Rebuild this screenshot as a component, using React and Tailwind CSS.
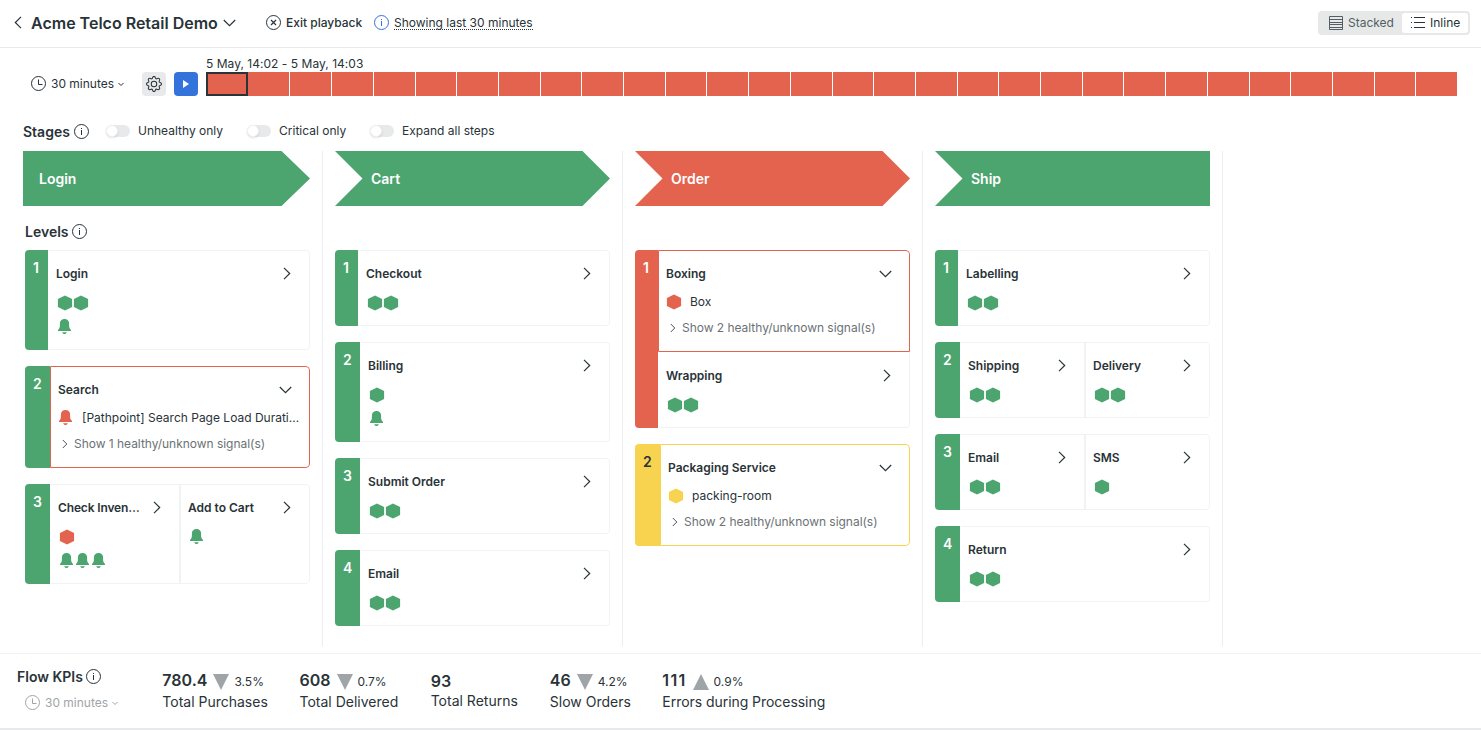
import { BsGear } from "react-icons/bs";

const TONES = {
  green: { bg: "bg-[#4ca46f]", text: "text-[#4ca46f]", digit: "text-white" },
  red: { bg: "bg-[#e3634f]", text: "text-[#e3634f]", digit: "text-white" },
  yellow: { bg: "bg-[#f8d350]", text: "text-[#f8d350]", digit: "text-[#293338]" },
};

function Info({ className = "" }) {
  return (
    <svg className={`shrink-0 ${className}`} width="15" height="15" viewBox="0 0 15 15" fill="none" stroke="currentColor">
      <circle cx="7.5" cy="7.5" r="7" />
      <path d="M7.5 6v5M7.5 4v1" />
    </svg>
  );
}

function Clock() {
  return (
    <svg className="-mt-px shrink-0" width="15" height="15" viewBox="0 0 15 15" fill="none" stroke="currentColor">
      <circle cx="7.5" cy="7.5" r="7" />
      <path d="M7.5 3.500v5h4" />
    </svg>
  );
}

function ChevronRight({ className = "" }) {
  return (
    <svg className={`shrink-0 ${className}`} width="8" height="13" viewBox="0 0 8 13" fill="none" stroke="currentColor" strokeWidth="1.2">
      <path d="M1 0.8l5.7 5.7L1 12.2" />
    </svg>
  );
}

function ChevronDown({ className = "" }) {
  return (
    <svg className={`shrink-0 ${className}`} width="13" height="8" viewBox="0 0 13 8" fill="none" stroke="currentColor" strokeWidth="1.2">
      <path d="M0.8 1l5.7 5.7L12.2 1" />
    </svg>
  );
}

function SmallChevron() {
  return (
    <svg className="shrink-0" width="6" height="5" viewBox="0 0 6 5" fill="none" stroke="currentColor">
      <path d="M0.5 1L3 3.5 5.5 1" />
    </svg>
  );
}

function Hex({ tone }) {
  return (
    <svg className={`shrink-0 ${TONES[tone].text}`} width="16" height="16" viewBox="0 0 16 16" fill="currentColor">
      <path d="M8 .4l7.1 3.700v7.800l-7.100 3.700-7.100-3.700V4.100z" />
    </svg>
  );
}

function Bell({ tone }) {
  return (
    <svg className={`shrink-0 ${TONES[tone].text}`} width="16" height="16" viewBox="0 0 16 16" fill="currentColor">
      <path d="M1 12.1V10.9C2.400 9.800 2.900 8.300 2.900 6.300V4.400C2.900 1.900 4.800.1 7.500.1S12.100 1.900 12.100 4.400V6.300C12.100 8.300 12.600 9.800 14 10.900V12.100zM5.200 13.200h4.600C9.400 14.400 8.600 15 7.500 15S5.600 14.400 5.200 13.200z" />
    </svg>
  );
}

const Signal = ({ kind, tone }) => (kind === "hex" ? <Hex tone={tone} /> : <Bell tone={tone} />);

function Step({ step, className }) {
  const open = Boolean(step.signal);
  return (
    <div className={`flex min-w-0 flex-1 flex-col border bg-white pt-[11px] pl-[7px] ${className}`}>
      <div className="flex h-6 items-center justify-between">
        <span className={`text-xs font-semibold whitespace-nowrap ${step.tight ? "tracking-[-0.15px]" : ""}`}>{step.name}</span>
        {open ? <ChevronDown className="mr-[17px]" /> : <ChevronRight className="-mt-px mr-[18px]" />}
      </div>
      {open ? (
        <div className="mt-[3px] flex flex-col">
          <div className="flex h-[26px] items-center gap-2">
            <Signal kind={step.signal.kind} tone={step.signal.tone} />
            <span className="text-xs whitespace-nowrap">{step.signal.label}</span>
          </div>
          <div className="flex h-[26px] items-center gap-1.5 pl-1 text-[#6b7275]">
            <svg width="6" height="10" viewBox="0 0 6 10" fill="none" stroke="#4a5256">
              <path d="M.8 1l4 4-4 4" />
            </svg>
            <span className="text-xs tracking-[-0.03px] whitespace-nowrap">{step.more}</span>
          </div>
        </div>
      ) : (
        <div className="mt-[5px] flex flex-col pl-px">
          {step.rows.map((row, i) => (
            <div key={i} className="flex h-6 items-center">
              {row.map(([kind, tone], j) => (
                <Signal key={j} kind={kind} tone={tone} />
              ))}
            </div>
          ))}
        </div>
      )}
    </div>
  );
}

function Level({ n, level }) {
  const tone = TONES[level.tone];
  const alone = level.steps.length === 1;
  return (
    <div className={`flex shrink-0 overflow-hidden rounded ${level.height}`}>
      <div className={`shrink-0 pt-[7px] pl-2 text-sm leading-[22px] font-semibold ${n === 1 ? "w-[23px]" : "w-[25px]"} ${tone.bg} ${tone.digit}`}>{n}</div>
      <div className={`flex min-w-0 flex-1 ${level.stacked ? "flex-col" : ""}`}>
        {level.steps.map((step, i) => (
          <Step
            key={step.name}
            step={step}
            className={step.frame ?? (i > 0 ? "rounded-r border-[#f1f2f2]" : alone ? "rounded-r border-[#f1f2f2] border-l-white" : "border-[#f1f2f2] border-l-white")}
          />
        ))}
      </div>
    </div>
  );
}

const H = ["hex", "green"];
const B = ["bell", "green"];
const one = (name, rows) => ({ tone: "green", height: rows.length > 1 ? "h-[100px]" : "h-[76px]", steps: [{ name, rows }] });

const STAGES = [
  {
    name: "Login",
    arrow: "pl-4 bg-[#4ca46f] [clip-path:polygon(0_0,calc(100%_-_28.5px)_0,100%_50%,calc(100%_-_28.5px)_100%,0_100%)]",
    levels: [
      one("Login", [[H, H], [B]]),
      {
        tone: "green",
        height: "h-[102px]",
        steps: [
          {
            name: "Search",
            frame: "rounded-r border-[#e3634f]",
            signal: { kind: "bell", tone: "red", label: "[Pathpoint] Search Page Load Durati…" },
            more: "Show 1 healthy/unknown signal(s)",
          },
        ],
      },
      {
        tone: "green",
        height: "h-[100px]",
        steps: [
          { name: "Check Inven…", tight: true, rows: [[["hex", "red"]], [B, B, B]] },
          { name: "Add to Cart", rows: [[B]] },
        ],
      },
    ],
  },
  {
    name: "Cart",
    arrow: "pl-9 bg-[#4ca46f] [clip-path:polygon(0_0,calc(100%_-_27.5px)_0,100%_50%,calc(100%_-_27.5px)_100%,0_100%,27.5px_50%)]",
    levels: [one("Checkout", [[H, H]]), one("Billing", [[H], [B]]), one("Submit Order", [[H, H]]), one("Email", [[H, H]])],
  },
  {
    name: "Order",
    arrow: "pl-9 bg-[#e3634f] [clip-path:polygon(0_0,calc(100%_-_27.5px)_0,100%_50%,calc(100%_-_27.5px)_100%,0_100%,27.5px_50%)]",
    levels: [
      {
        tone: "red",
        height: "h-[178px]",
        stacked: true,
        steps: [
          {
            name: "Boxing",
            frame: "basis-[102px] grow-0 shrink-0 rounded-tr border-[#e3634f]",
            signal: { kind: "hex", tone: "red", label: "Box" },
            more: "Show 2 healthy/unknown signal(s)",
          },
          { name: "Wrapping", frame: "rounded-br border-[#f1f2f2] border-l-white border-t-white", rows: [[H, H]] },
        ],
      },
      {
        tone: "yellow",
        height: "h-[102px]",
        steps: [
          {
            name: "Packaging Service",
            frame: "rounded-r border-[#f8d350]",
            signal: { kind: "hex", tone: "yellow", label: "packing-room" },
            more: "Show 2 healthy/unknown signal(s)",
          },
        ],
      },
    ],
  },
  {
    name: "Ship",
    arrow: "pl-9 bg-[#4ca46f] [clip-path:polygon(0_0,100%_0,100%_100%,0_100%,27.5px_50%)]",
    levels: [
      one("Labelling", [[H, H]]),
      { tone: "green", height: "h-[76px]", steps: [{ name: "Shipping", rows: [[H, H]] }, { name: "Delivery", rows: [[H, H]] }] },
      { tone: "green", height: "h-[76px]", steps: [{ name: "Email", rows: [[H, H]] }, { name: "SMS", rows: [[H]] }] },
      one("Return", [[H, H]]),
    ],
  },
];

const TOGGLES = [
  ["Unhealthy only", "w-[141px]"],
  ["Critical only", "w-[123px]"],
  ["Expand all steps", ""],
];

const KPIS = [
  { value: "780.4", dir: "down", delta: "3.5%", label: "Total Purchases", width: "w-[137.2px]" },
  { value: "608", dir: "down", delta: "0.7%", label: "Total Delivered", width: "w-[131.2px]" },
  { value: "93", label: "Total Returns", width: "w-[119.2px]" },
  { value: "46", dir: "down", delta: "4.2%", label: "Slow Orders", width: "w-[112.5px]" },
  { value: "111", dir: "up", delta: "0.9%", label: "Errors during Processing", width: "", spacing: "tracking-[1.3px]" },
];

export default function App() {
  return (
    <div className="flex h-[730px] w-full flex-col overflow-hidden bg-white font-['Inter',sans-serif] text-xs text-[#293338]">
      <header className="flex h-12 shrink-0 items-center border-b border-[#e7e9ea] pr-[11px] pb-[2px] pl-[14px]">
        <ChevronRight className="rotate-180" />
        <h1 className="ml-[9px] w-[192px] text-base font-semibold whitespace-nowrap">Acme Telco Retail Demo</h1>
        <ChevronDown />
        <button className="ml-[30px] flex items-center gap-[5px] font-medium">
          <svg width="15" height="15" viewBox="0 0 15 15" fill="none" stroke="currentColor">
            <circle cx="7.5" cy="7.5" r="7" />
            <path d="M5 5l5 5M10 5l-5 5" strokeWidth="1.2" />
          </svg>
          <span className="w-[77px] text-left whitespace-nowrap">Exit playback</span>
        </button>
        <div className="ml-[11px] flex items-center gap-[5px]">
          <Info className="text-[#3472dc]" />
          <span className="border-b border-dotted border-[#293338] leading-[13px] whitespace-nowrap">Showing last 30 minutes</span>
        </div>
        <div className="ml-auto flex h-6 items-center rounded bg-[#e7e9e9] p-0.5 text-[#535e65]">
          <div className="flex w-[82px] items-center gap-[5px] pl-[9px]">
            <svg width="14" height="14" viewBox="0 0 14 14" fill="none" stroke="currentColor">
              <path d="M.5 .5h13v13H.5zM1 3.500h12M1 6.500h12M1 8.500h12M1 11.500h12" />
            </svg>
            <span>Stacked</span>
          </div>
          <div className="flex h-5 w-[66px] items-center gap-[5px] rounded-[3px] bg-white pl-[9px] text-[#293338]">
            <svg width="14" height="12" viewBox="0 0 14 12" fill="none" stroke="currentColor">
              <path d="M0 .5h1M3 .5h11M0 5.500h1M3 5.500h11M0 10.500h1M3 10.500h11" />
            </svg>
            <span>Inline</span>
          </div>
        </div>
      </header>

      <section className="flex h-[72px] shrink-0 pt-6 pr-6 pl-[31px]">
        <div className="flex h-6 w-[111px] items-center">
          <Clock />
          <span className="ml-[5px] w-[67px] whitespace-nowrap">30 minutes</span>
          <SmallChevron />
        </div>
        <button className="flex size-6 items-center justify-center rounded bg-[#e7e9ea]">
          <BsGear size={16} />
        </button>
        <button className="ml-2 flex size-6 items-center justify-center rounded bg-[#3472dc] text-white">
          <svg width="6" height="8" viewBox="0 0 6 8" fill="currentColor">
            <path d="M0 0l6 4-6 4z" />
          </svg>
        </button>
        <div className="-mt-4 ml-2 flex flex-1 flex-col">
          <div className="h-4 leading-4 tracking-[0.03px]">5 May, 14:02 - 5 May, 14:03</div>
          <div className="grid h-6 grid-cols-[repeat(30,minmax(0,1fr))]">
            {Array.from({ length: 30 }, (_, i) => (
              <div key={i} className={`bg-[#e3634f] ${i === 0 ? "border-2 border-[#293338]" : i > 1 ? "border-l border-white" : ""}`} />
            ))}
          </div>
        </div>
      </section>

      <div className="flex h-[31px] shrink-0 items-start pl-[23px]">
        <div className="flex h-[23px] w-[83px] items-center gap-1">
          <h2 className="text-sm font-semibold">Stages</h2>
          <Info />
        </div>
        {TOGGLES.map(([label, width]) => (
          <label key={label} className={`flex h-[22px] items-center gap-2 whitespace-nowrap ${width}`}>
            <span className="flex h-3 w-6 items-center rounded-full bg-[#e7e9ea]">
              <span className="size-3 rounded-full border border-[#f1f2f2] bg-white shadow-sm" />
            </span>
            <span>{label}</span>
          </label>
        ))}
      </div>

      <main className="flex h-[495px] shrink-0">
        {STAGES.map((stage, i) => (
          <section key={stage.name} className={`flex shrink-0 flex-col border-r border-[#ecedee] pr-3 ${i === 0 ? "w-[323px] pl-[23px]" : "w-[300px] pl-3"}`}>
            <div className={`flex h-[55px] shrink-0 items-center text-sm font-semibold text-white ${stage.arrow}`}>{stage.name}</div>
            <div className={`flex h-11 shrink-0 items-center gap-[3px] pt-[7px] ${i === 0 ? "pl-0.5" : ""}`}>
              {i === 0 && (
                <>
                  <h2 className="text-sm font-semibold">Levels</h2>
                  <Info />
                </>
              )}
            </div>
            <div className={`flex flex-col gap-4 ${i === 0 ? "pl-0.5" : ""}`}>
              {stage.levels.map((level, n) => (
                <Level key={n} n={n + 1} level={level} />
              ))}
            </div>
          </section>
        ))}
      </main>

      <footer className="mt-[7px] flex h-[77px] shrink-0 border-t border-b-2 border-t-[#f1f2f2] border-b-[#e7e9ea] pl-[17px]">
        <div className="flex w-[145.3px] flex-col pt-[13px]">
          <div className="flex h-5 items-center gap-[3px]">
            <h2 className="text-sm font-semibold whitespace-nowrap">Flow KPIs</h2>
            <Info className="-mt-px" />
          </div>
          <div className="mt-[7px] flex h-[18px] items-center pl-2 text-[#9fa5a7]">
            <Clock />
            <span className="ml-[5px] w-[67px] whitespace-nowrap">30 minutes</span>
            <SmallChevron />
          </div>
        </div>
        {KPIS.map((kpi) => (
          <div key={kpi.label} className={`flex flex-col whitespace-nowrap ${kpi.width} ${kpi.dir ? "pt-[14px]" : "pt-[15px]"}`}>
            <div className="flex h-6 items-center">
              <span className={`text-base font-semibold ${kpi.spacing ?? ""}`}>{kpi.value}</span>
              {kpi.dir && (
                <>
                  <svg className="mt-1 ml-1.5 text-[#9fa5a7]" width="16" height="16" viewBox="0 0 16 16" fill="currentColor">
                    <path d={kpi.dir === "down" ? "M0 0h16L8 16z" : "M0 16h16L8 0z"} />
                  </svg>
                  <span className="mt-1 ml-[5px]">{kpi.delta}</span>
                </>
              )}
            </div>
            <div className={`text-sm leading-5 ${kpi.dir ? "" : "-mt-[2px]"} ${kpi.spacing ? "tracking-[-0.05px]" : ""}`}>{kpi.label}</div>
          </div>
        ))}
      </footer>
    </div>
  );
}
